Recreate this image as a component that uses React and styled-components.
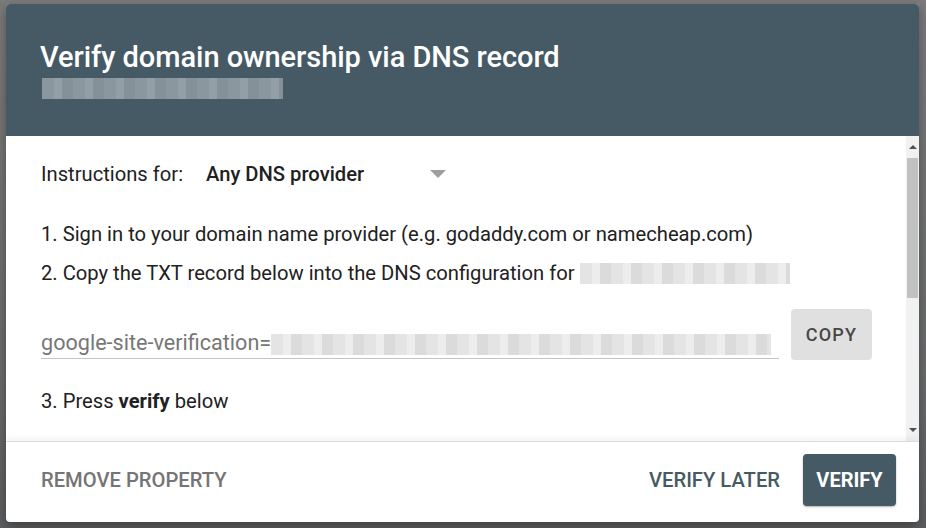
import React from 'react'
import styled, { createGlobalStyle } from 'styled-components'

const Global = createGlobalStyle`
    html, body {
        margin: 0;
        padding: 0;
        width: 926px;
        height: 528px;
        overflow: hidden;
        background: linear-gradient(#7b7b7b, #6a6b6c 70%, #5c5e60);
        font-family: Roboto, "Liberation Sans", sans-serif;
    }
`

const Page = styled.div`
    width: 926px;
    height: 528px;
    padding: 4px 7px 6px 6px;
    box-sizing: border-box;
`

const Dialog = styled.div`
    width: 100%;
    height: 100%;
    background: #ffffff;
    border-radius: 4px;
    overflow: hidden;
    display: flex;
    flex-direction: column;
    box-shadow: 0 4px 12px rgba(0, 0, 0, 0.35);
`

const Header = styled.div`
    height: 132px;
    flex-shrink: 0;
    background: #465a65;
    padding: 34px 34px 0 34px;
    box-sizing: border-box;
`

const Title = styled.h1`
    margin: 0;
    color: #ffffff;
    font-size: 29px;
    font-weight: 500;
    line-height: 38px;
    letter-spacing: -0.05px;
`

const Blur = styled.div`
    width: ${p => p.w}px;
    height: ${p => p.h || 20}px;
    display: inline-block;
    vertical-align: middle;
    background:
        repeating-linear-gradient(90deg,
            rgba(255,255,255,0.0) 0 12px,
            rgba(255,255,255,${p => p.dark ? 0.08 : 0.35}) 12px 20px,
            rgba(0,0,0,0.04) 20px 31px),
        ${p => p.dark ? '#8a979e' : '#e4e4e4'};
`

const SubtitleRow = styled.div`
    margin-top: 2px;
    padding-left: 2px;
    line-height: 0;
`

const BodyWrap = styled.div`
    flex: 1;
    display: flex;
    min-height: 0;
`

const Content = styled.div`
    flex: 1;
    padding: 18px 34px 0 35px;
    overflow: hidden;
    color: #212121;
    font-size: 20.2px;
`

const SelectRow = styled.div`
    display: flex;
    align-items: center;
    height: 40px;
`

const Label = styled.span`
    color: #212121;
    width: 165px;
`

const Select = styled.div`
    display: flex;
    align-items: center;
    width: 241px;
    justify-content: space-between;
    font-weight: 500;
    color: #212121;
`

const Caret = styled.span`
    width: 0;
    height: 0;
    border-left: 8px solid transparent;
    border-right: 8px solid transparent;
    border-top: 8px solid #9e9e9e;
    margin-right: 1px;
`

const Step = styled.p`
    margin: ${p => p.top}px 0 0 0;
    line-height: 28px;
    display: flex;
    align-items: center;
    white-space: nowrap;

    b {
        font-weight: 700;
        margin: 0 5px;
    }
`

const FieldRow = styled.div`
    display: flex;
    align-items: flex-start;
    gap: 12px;
    margin-top: 22px;
`

const Field = styled.div`
    flex: 1;
    height: 50px;
    border-bottom: 1px solid #c4c4c4;
    display: flex;
    align-items: flex-end;
    padding-bottom: 3px;
    box-sizing: border-box;
    color: #777777;
    font-size: 21.6px;
    white-space: nowrap;
    overflow: hidden;
`

const CopyButton = styled.button`
    width: 81px;
    height: 51px;
    border: none;
    border-radius: 4px;
    background: #e0e0e0;
    color: #474747;
    font-family: inherit;
    font-size: 18px;
    font-weight: 500;
    letter-spacing: 1.2px;
`

const Scrollbar = styled.div`
    width: 13px;
    background: #f1f1f1;
    display: flex;
    flex-direction: column;
    align-items: center;
`

const Arrow = styled.span`
    width: 0;
    height: 0;
    margin: 9px 0;
    border-left: 4px solid transparent;
    border-right: 4px solid transparent;
    ${p => p.up ? 'border-bottom: 4px solid #505050;' : 'border-top: 4px solid #505050;'}
`

const Thumb = styled.div`
    width: 11px;
    height: 140px;
    background: #c1c1c1;
`

const Spacer = styled.div`
    flex: 1;
`

const Footer = styled.div`
    height: 81px;
    flex-shrink: 0;
    border-top: 1px solid #dcdcdc;
    box-shadow: 0 -3px 6px rgba(0, 0, 0, 0.05);
    display: flex;
    align-items: center;
    padding: 0 23px 5px 35px;
    box-sizing: border-box;
    position: relative;
`

const TextButton = styled.button`
    border: none;
    background: none;
    padding: 0;
    font-family: inherit;
    font-size: 20.2px;
    font-weight: 500;
    color: ${p => p.color};
    margin-right: ${p => p.gap || 0}px;
`

const VerifyButton = styled.button`
    width: 93px;
    height: 52px;
    border: none;
    border-radius: 4px;
    background: #465a65;
    color: #ffffff;
    font-family: inherit;
    font-size: 20px;
    font-weight: 700;
    box-shadow: 0 1px 2px rgba(0, 0, 0, 0.3);
`

export default function App() {
    return (
        <Page>
            <Global />
            <Dialog>
                <Header>
                    <Title>Verify domain ownership via DNS record</Title>
                    <SubtitleRow>
                        <Blur w={241} h={21} dark />
                    </SubtitleRow>
                </Header>

                <BodyWrap>
                    <Content>
                        <SelectRow>
                            <Label>Instructions for:</Label>
                            <Select>
                                Any DNS provider
                                <Caret />
                            </Select>
                        </SelectRow>

                        <Step top={26}>1. Sign in to your domain name provider (e.g. godaddy.com or namecheap.com)</Step>
                        <Step top={11}>
                            2. Copy the TXT record below into the DNS configuration for&nbsp;
                            <Blur w={210} h={21} />
                        </Step>

                        <FieldRow>
                            <Field>
                                google-site-verification=
                                <Blur w={500} h={21} />
                            </Field>
                            <CopyButton>COPY</CopyButton>
                        </FieldRow>

                        <Step top={27}>3. Press<b>verify</b>below</Step>
                    </Content>

                    <Scrollbar>
                        <Arrow up />
                        <Thumb />
                        <Spacer />
                        <Arrow />
                    </Scrollbar>
                </BodyWrap>

                <Footer>
                    <TextButton color="#757575">REMOVE PROPERTY</TextButton>
                    <Spacer />
                    <TextButton color="#455a64" gap={23}>VERIFY LATER</TextButton>
                    <VerifyButton>VERIFY</VerifyButton>
                </Footer>
            </Dialog>
        </Page>
    )
}
